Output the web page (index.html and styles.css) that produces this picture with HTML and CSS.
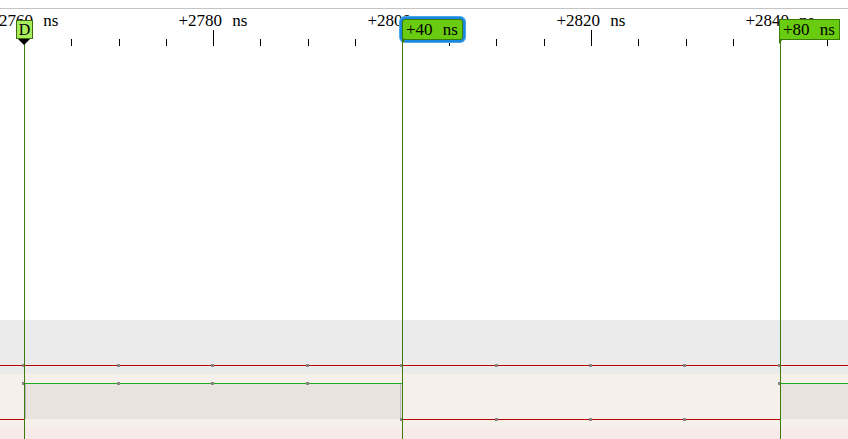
FILE: index.html
```html
<!DOCTYPE html>
<html lang="en">
<head>
    <meta charset="UTF-8">
    <title>Waveform</title>
    <link rel="stylesheet" href="styles.css">
</head>
<body>
    <div class="view">
        <div class="ruler" id="ruler"></div>

        <div class="track track-a">
            <svg width="848" height="54">
                <line class="sig-low" x1="0" y1="45.5" x2="848" y2="45.5"></line>
                <g class="samples" id="samples-a"></g>
            </svg>
        </div>
        <div class="track track-b">
            <svg width="848" height="54">
                <rect class="sig-fill" x="25" y="10" width="377" height="35"></rect>
                <rect class="sig-fill" x="781" y="10" width="67" height="35"></rect>
                <line class="sig-edge" x1="25.5" y1="10" x2="25.5" y2="45"></line>
                <line class="sig-edge" x1="400.5" y1="10" x2="400.5" y2="45"></line>
                <line class="sig-edge" x1="780.5" y1="10" x2="780.5" y2="45"></line>
                <line class="sig-high" x1="24" y1="9.5" x2="402" y2="9.5"></line>
                <line class="sig-high" x1="780" y1="9.5" x2="848" y2="9.5"></line>
                <line class="sig-low" x1="0" y1="45.5" x2="24" y2="45.5"></line>
                <line class="sig-low" x1="402" y1="45.5" x2="780" y2="45.5"></line>
                <g class="samples" id="samples-b"></g>
            </svg>
        </div>
        <div class="track track-c"></div>

        <div class="cursor" style="left: 24px; top: 44px"></div>
        <div class="cursor" style="left: 402px; top: 40px"></div>
        <div class="cursor" style="left: 780px; top: 38px"></div>

        <div class="marker" style="left: 16px">
            <div class="marker-box">D</div>
            <div class="marker-tip"></div>
        </div>
        <div class="flag selected" style="left: 402px; top: 19px">+40 ns</div>
        <div class="flag" style="left: 779px; top: 19px">+80 ns</div>
    </div>

    <script>
        const ruler = document.getElementById('ruler');
        const PX_PER_NS = 9.45;
        const START_NS = 2760;
        const ORIGIN_X = 24;

        function xAt(ns) {
            return Math.round(ORIGIN_X + (ns - START_NS) * PX_PER_NS);
        }

        for (let ns = START_NS; ns <= 2850; ns += 5) {
            const isMajor = (ns - START_NS) % 20 === 0;
            const tick = document.createElement('div');
            tick.className = isMajor ? 'tick major' : 'tick';
            tick.style.left = xAt(ns) + 'px';
            ruler.appendChild(tick);

            if (isMajor) {
                const label = document.createElement('div');
                label.className = 'tick-label';
                label.textContent = '+' + ns + ' ns';
                label.style.left = xAt(ns) + 'px';
                ruler.appendChild(label);
            }
        }

        // sample points every 10 ns
        const levels = { a: [45], b: [9, 9, 9, 9, 45, 45, 45, 45, 9] };
        ['a', 'b'].forEach(key => {
            const group = document.getElementById('samples-' + key);
            for (let i = 0; i < 9; i++) {
                const y = levels[key][i] ?? levels[key][0];
                const cx = ORIGIN_X + i * PX_PER_NS * 10 - 0.5;
                const dot = document.createElementNS('http://www.w3.org/2000/svg', 'rect');
                dot.setAttribute('x', Math.round(cx - 1.5));
                dot.setAttribute('y', y - 1);
                dot.setAttribute('width', 3);
                dot.setAttribute('height', 3);
                group.appendChild(dot);
            }
        });
    </script>
</body>
</html>
```

FILE: styles.css
```css
body {
    margin: 0;
    background-color: #ffffff;
    font-family: "Liberation Serif", "DejaVu Serif", serif;
}
.view {
    position: relative;
    width: 848px;
    height: 439px;
    overflow: hidden;
    padding-top: 8px;
    box-sizing: border-box;
}
.ruler {
    position: relative;
    height: 311px;
    border-top: 1px solid #c4c4c4;
}
.tick {
    position: absolute;
    top: 30px;
    width: 1px;
    height: 7px;
    background-color: #000;
}
.tick.major {
    top: 21px;
    height: 16px;
}
.tick-label {
    position: absolute;
    top: 2px;
    transform: translateX(-50%);
    font-size: 17px;
    word-spacing: 6px;
    white-space: nowrap;
    color: #000;
}
.track {
    height: 54px;
}
.track svg {
    display: block;
}
.track-a {
    background-color: #ebebeb;
}
.track-b {
    background-color: #f5f0ea;
}
.track-c {
    height: 12px;
    background-color: #f9eaea;
}
.sig-low {
    stroke: #b40000;
    stroke-width: 1;
}
.sig-high {
    stroke: #1eaa1e;
    stroke-width: 1;
}
.sig-fill {
    fill: #e8e4dd;
}
.sig-edge {
    stroke: #b9b9b9;
    stroke-width: 1;
}
.samples rect {
    fill: #868686;
}
.cursor {
    position: absolute;
    bottom: 0;
    width: 1px;
    background-color: #3f7a0c;
}
.marker {
    position: absolute;
    top: 20px;
    width: 17px;
}
.marker-box {
    height: 17px;
    border: 1px solid #3f6a10;
    background-color: #a8ee5c;
    font-size: 16px;
    line-height: 18px;
    text-align: center;
    color: #000;
}
.marker-tip {
    width: 0;
    height: 0;
    margin-left: 2px;
    border-left: 6px solid transparent;
    border-right: 6px solid transparent;
    border-top: 6px solid #000;
}
.flag {
    position: absolute;
    height: 19px;
    padding: 0 4px 0 3px;
    border: 1px solid #3a7a06;
    background-color: #6acc10;
    font-size: 17px;
    line-height: 20px;
    word-spacing: 6px;
    white-space: nowrap;
    color: #000;
}
.flag::after {
    content: "";
    position: absolute;
    left: -1px;
    top: 100%;
    border-left: 4px solid #3a7a06;
    border-bottom: 5px solid transparent;
}
.flag.selected {
    box-shadow: 0 0 0 2px #1a88dc, 0 0 0 3px #4aa6ec;
    border-radius: 3px;
}
```
